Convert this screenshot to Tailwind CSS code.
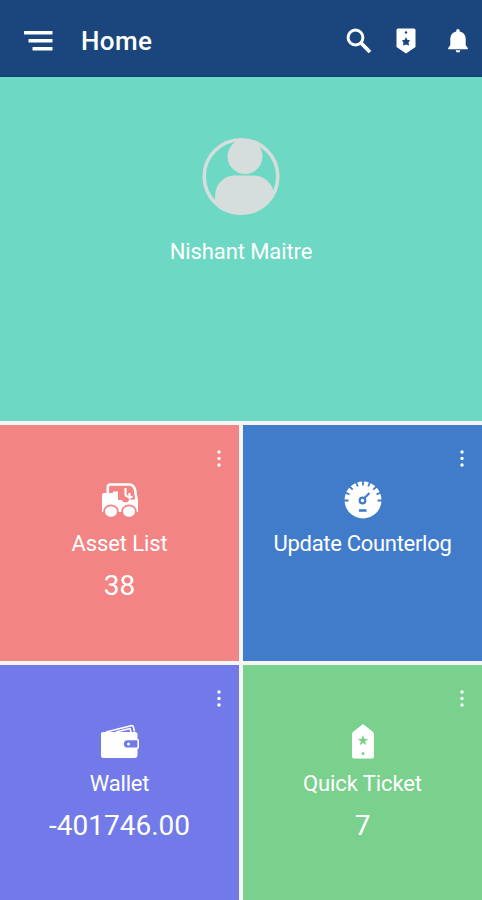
<!DOCTYPE html>
<html lang="en">
<head>
    <meta charset="UTF-8">
    <meta name="viewport" content="width=device-width, initial-scale=1.0">
    <title>Home</title>
    <script src="https://cdn.jsdelivr.net/npm/@tailwindcss/browser@4"></script>
</head>
<body class="font-[Roboto,sans-serif] bg-[#f3f6f5] text-white">
    <div class="w-[482px] h-[900px] flex flex-col overflow-hidden">
        <!-- Header -->
        <header class="h-[77px] shrink-0 bg-[#1a467d] border-b-2 border-[#174276] flex items-center pt-[6px] pl-6 pr-3.5">
            <button class="w-[29px] h-5" aria-label="Menu">
                <svg class="block" width="29" height="20" viewBox="0 0 29 20" fill="#fff">
                    <rect x="0" y="0" width="28.5" height="3.4" rx="0.5"/>
                    <rect x="4.5" y="8" width="24" height="3.4" rx="0.5"/>
                    <rect x="8.5" y="16" width="20" height="3.4" rx="0.5"/>
                </svg>
            </button>
            <h1 class="ml-7 mt-px text-[26px] leading-8 font-medium tracking-[0.4px]">Home</h1>
            <div class="ml-auto flex items-center">
                <svg width="26" height="26" viewBox="0 0 26 26" fill="none" stroke="#fff">
                    <circle cx="9.5" cy="9.5" r="7.4" stroke-width="3"/>
                    <path d="M15 15l9 9" stroke-width="3.8"/>
                </svg>
                <svg class="ml-6" width="20" height="26" viewBox="0 0 20 26">
                    <path fill="#fff" d="M2 .5h16q1.500 0 1.500 1.500v17L10 25.500.5 19V2Q.5.5 2 .5z"/>
                    <circle cx="10" cy="4.500" r="1.200" fill="#1a467d"/>
                    <path fill="#1a467d" d="M10 9l1.200 2.800 2.800.4-1.500 2.200.6 3-3.100-.8-3.100.8.6-3L6 12.200l2.800-.4z"/>
                </svg>
                <svg class="ml-8" width="20" height="24" viewBox="0 0 20 24" fill="#fff">
                    <path d="M10 0c1 0 1.700.8 1.700 1.700v.7c4 .9 6 4 6 7.700v6.200l2.100 2.600v1.300H.2v-1.300l2.100-2.600v-6.200c0-3.700 2-6.800 6-7.700v-.7C8.300.8 9 0 10 0z"/>
                    <path d="M7.700 21.200h4.600a2.300 2.300 0 0 1-4.600 0z"/>
                </svg>
            </div>
        </header>

        <!-- Profile -->
        <section class="h-[344px] shrink-0 bg-[#6dd8c3] flex flex-col items-center pt-[60px]">
            <svg width="78" height="80" viewBox="0 0 78 80">
                <clipPath id="avatar"><circle cx="39" cy="39.500" r="38.500"/></clipPath>
                <g clip-path="url(#avatar)" fill="#d5dddd">
                    <circle cx="43" cy="19.500" r="17.500"/>
                    <path d="M13 80V60C13 47 22 38.500 33 38.500h18c12 0 21 8.500 21 21.500v20z"/>
                </g>
                <circle cx="39" cy="39.500" r="36.800" fill="none" stroke="#d5dddd" stroke-width="3.600"/>
            </svg>
            <p class="mt-[21px] text-[22px] leading-7 tracking-[-0.1px]">Nishant Maitre</p>
        </section>

        <!-- Tiles -->
        <main class="mt-1 flex-1 grid grid-cols-2 grid-rows-2 gap-1">
            <section class="relative bg-[#f38484] flex flex-col items-center pt-[56px]">
                <svg class="absolute top-6 right-[18px]" width="4" height="18" viewBox="0 0 4 18" fill="#fff"><circle cx="2" cy="3" r="1.700"/><circle cx="2" cy="9.500" r="1.700"/><circle cx="2" cy="16" r="1.700"/></svg>
                <svg width="38" height="38" viewBox="0 0 38 38">
                    <path fill="none" stroke="#fff" stroke-width="2.600" stroke-linejoin="round" d="M6.800 14V6q0-2.500 2.500-2.500H28q4.500 0 6 5l1.700 11.500"/>
                    <path fill="#fff" d="M3 12h9v-1.500h5V19h3.500q1.500 2.500 4 2.500 3 0 3.500-3h9V31H1V14q0-2 2-2z"/>
                    <path fill="none" stroke="#fff" stroke-width="2.200" d="M24.500 7v6q0 2 2 2.500l5 .5M28.500 12v6"/>
                    <g fill="#fff" stroke="#f38484" stroke-width="1.800">
                        <ellipse cx="10" cy="30.500" rx="6.900" ry="6.200"/>
                        <ellipse cx="28" cy="30.500" rx="6.900" ry="6.200"/>
                    </g>
                </svg>
                <h2 class="mt-[11px] text-[22px] leading-7 tracking-[-0.1px]">Asset List</h2>
                <p class="mt-3 text-[28px] leading-8">38</p>
            </section>

            <section class="relative bg-[#417ccb] flex flex-col items-center pt-[56px]">
                <svg class="absolute top-6 right-[18px]" width="4" height="18" viewBox="0 0 4 18" fill="#fff"><circle cx="2" cy="3" r="1.700"/><circle cx="2" cy="9.500" r="1.700"/><circle cx="2" cy="16" r="1.700"/></svg>
                <svg width="38" height="38" viewBox="0 0 38 38">
                    <circle cx="19" cy="19" r="18.500" fill="#fff"/>
                    <g stroke="#417ccb" stroke-width="1.800">
                        <path d="M0 19.500h4.500M33.500 19.500H38M1 11.500L5.500 13.300M37 11.500L32.500 13.300M5.500 5.500L8.700 8.700M32.500 5.500L29.300 8.700M12 1L13.800 5.500M26 1L24.200 5.500M19 0v4.500"/>
                        <circle cx="18.500" cy="19.500" r="2.800" fill="none" stroke-width="2.200"/>
                        <path d="M20.500 17L25.500 12" stroke-width="2.200"/>
                        <path d="M15 29.500h7.500" stroke-width="2.600"/>
                    </g>
                </svg>
                <h2 class="mt-[11px] text-[22px] leading-7 tracking-[-0.3px]">Update Counterlog</h2>
            </section>

            <section class="relative bg-[#727ae9] flex flex-col items-center pt-[57px]">
                <svg class="absolute top-6 right-[18px]" width="4" height="18" viewBox="0 0 4 18" fill="#fff"><circle cx="2" cy="3" r="1.700"/><circle cx="2" cy="9.500" r="1.700"/><circle cx="2" cy="16" r="1.700"/></svg>
                <svg width="38" height="38" viewBox="0 0 38 38">
                    <path fill="none" stroke="#fff" stroke-width="1.600" stroke-linejoin="round" d="M5 10L30 3.700q2-.4 2.500 1.500l1 4.500M15 10l14-3.500 1 3.500"/>
                    <path fill="#fff" d="M2 10h32q2.500 0 2.500 2.500V33q0 3-3 3h-31Q0 36 0 33.500V11.500Q0 10 2 10z"/>
                    <path fill="#727ae9" stroke="#fff" stroke-width="1.600" d="M26.500 17.500H36q1.200 0 1.200 1.200v6.500q0 1.200-1.200 1.200h-9.500a4.400 4.400 0 0 1 0-8.900z"/>
                    <circle cx="27.500" cy="22" r="1.500" fill="#fff"/>
                </svg>
                <h2 class="mt-[10px] text-[22px] leading-7 tracking-[-0.2px]">Wallet</h2>
                <p class="mt-3 text-[28px] leading-8">-401746.00</p>
            </section>

            <section class="relative bg-[#7ad08d] flex flex-col items-center pt-[57px]">
                <svg class="absolute top-6 right-[18px]" width="4" height="18" viewBox="0 0 4 18" fill="#fff"><circle cx="2" cy="3" r="1.700"/><circle cx="2" cy="9.500" r="1.700"/><circle cx="2" cy="16" r="1.700"/></svg>
                <svg width="24" height="38" viewBox="0 0 24 38">
                    <path fill="#fff" d="M12 2l9.500 7.500q1.500 1.200 1.500 3V34.500q0 2-2 2H3q-2 0-2-2V12.500q0-1.800 1.500-3z"/>
                    <path fill="#7ad08d" d="M12 13l1.300 3.800 4 .1-3.200 2.400 1.200 3.900L12 20.900l-3.300 2.300 1.200-3.900-3.200-2.400 4-.1z"/>
                    <circle cx="12" cy="31.500" r="1.500" fill="#7ad08d"/>
                </svg>
                <h2 class="mt-[10px] text-[22px] leading-7 tracking-[-0.1px]">Quick Ticket</h2>
                <p class="mt-3 text-[28px] leading-8">7</p>
            </section>
        </main>
    </div>
</body>
</html>
